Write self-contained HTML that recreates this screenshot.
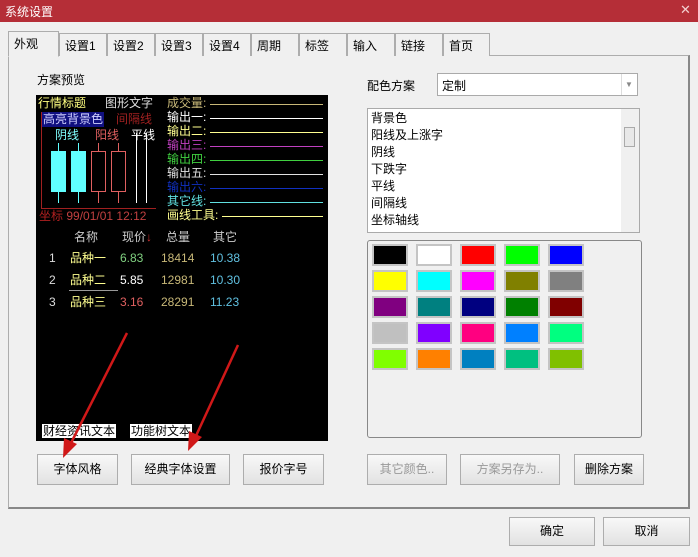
<!DOCTYPE html>
<html><head><meta charset="utf-8"><style>
*{margin:0;padding:0;box-sizing:border-box}
body{width:698px;height:557px;background:#f0f0f0;font-family:"Liberation Sans","Noto Sans CJK SC",sans-serif;font-size:12px;color:#000;position:relative;overflow:hidden}
.a{position:absolute;white-space:nowrap}
.tab{position:absolute;top:33px;height:23px;border:1px solid #adadad;border-bottom:none;background:#f0f0f0;padding:3px 0 0 5px;font-size:12px}
.btn{position:absolute;border:1px solid #adadad;background:linear-gradient(#f8f8f8,#e2e2e2);text-align:center;font-size:12px}
.pv{position:absolute;left:36px;top:95px;width:292px;height:346px;background:#000;overflow:hidden}
.pv .a{font-size:12px;line-height:14px}
.ln{position:absolute;height:1px}
.sw{position:absolute;width:36px;height:22px;border:2px solid #c4c4c4}
.rc{position:absolute;width:15px;height:41px;border:1px solid #e06060;background:#000}
</style></head><body>
<div class="a" style="left:0;top:0;width:698px;height:22px;background:#b52e37"></div>
<div class="a" style="left:5px;top:3px;color:#fff;font-size:12px">系统设置</div>
<div class="a" style="left:680px;top:2px;color:#f3d0d0;font-size:13px">✕</div>
<div class="a" style="left:8px;top:55px;width:682px;height:454px;border:1px solid #adadad;border-right:2px solid #888;border-bottom:2px solid #888;background:#f0f0f0"></div>
<div class="tab" style="left:8px;top:31px;width:51px;height:26px;border-bottom:1px solid #f0f0f0;z-index:2">外观</div>
<div class="tab" style="left:59px;width:48px">设置1</div>
<div class="tab" style="left:107px;width:48px">设置2</div>
<div class="tab" style="left:155px;width:48px">设置3</div>
<div class="tab" style="left:203px;width:48px">设置4</div>
<div class="tab" style="left:251px;width:48px">周期</div>
<div class="tab" style="left:299px;width:48px">标签</div>
<div class="tab" style="left:347px;width:48px">输入</div>
<div class="tab" style="left:395px;width:48px">链接</div>
<div class="tab" style="left:443px;width:47px">首页</div>
<div class="a" style="left:37px;top:71px">方案预览</div>
<div class="pv">
 <div class="a" style="left:2px;top:1px;color:#ffff80">行情标题</div>
 <div class="a" style="left:69px;top:1px;color:#e0e0e0">图形文字</div>
 <div class="a" style="left:5px;top:17px;width:63px;height:15px;background:#101080"></div>
 <div class="a" style="left:7px;top:17px;color:#d0d0ff">高亮背景色</div>
 <div class="a" style="left:80px;top:17px;color:#a02020">间隔线</div>
 <div class="ln" style="left:5px;top:17px;width:1px;height:96px;background:#a02020"></div>
 <div class="ln" style="left:5px;top:113px;width:115px;background:#a02020"></div>
 <div class="a" style="left:19px;top:33px;color:#80ffff">阴线</div>
 <div class="a" style="left:59px;top:33px;color:#e06060">阳线</div>
 <div class="a" style="left:95px;top:33px;color:#fff">平线</div>
 <div class="ln" style="left:22px;top:48px;width:1px;height:60px;background:#60ffff"></div>
 <div class="a" style="left:15px;top:56px;width:15px;height:41px;background:#60ffff"></div>
 <div class="ln" style="left:42px;top:48px;width:1px;height:60px;background:#60ffff"></div>
 <div class="a" style="left:35px;top:56px;width:15px;height:41px;background:#60ffff"></div>
 <div class="ln" style="left:62px;top:48px;width:1px;height:60px;background:#e06060"></div>
 <div class="rc" style="left:55px;top:56px"></div>
 <div class="ln" style="left:82px;top:48px;width:1px;height:60px;background:#e06060"></div>
 <div class="rc" style="left:75px;top:56px"></div>
 <div class="ln" style="left:100px;top:38px;width:1px;height:70px;background:#fff"></div>
 <div class="ln" style="left:110px;top:38px;width:1px;height:70px;background:#fff"></div>
 <div class="a" style="left:3px;top:114px;color:#b02020">坐标 <span style="color:#c04040">99/01/01 12:12</span></div>
 <div class="a" style="left:131px;top:1px;color:#c8b878">成交量:</div><div class="ln" style="left:174px;top:9px;width:113px;background:#c8b878"></div>
 <div class="a" style="left:131px;top:15px;color:#fff">输出一:</div><div class="ln" style="left:174px;top:23px;width:113px;background:#fff"></div>
 <div class="a" style="left:131px;top:29px;color:#ffff90">输出二:</div><div class="ln" style="left:174px;top:37px;width:113px;background:#ffff90"></div>
 <div class="a" style="left:131px;top:43px;color:#c040c0">输出三:</div><div class="ln" style="left:174px;top:51px;width:113px;background:#c040c0"></div>
 <div class="a" style="left:131px;top:57px;color:#40d040">输出四:</div><div class="ln" style="left:174px;top:65px;width:113px;background:#40d040"></div>
 <div class="a" style="left:131px;top:71px;color:#e0e0e0">输出五:</div><div class="ln" style="left:174px;top:79px;width:113px;background:#e0e0e0"></div>
 <div class="a" style="left:131px;top:85px;color:#1030c0">输出六:</div><div class="ln" style="left:174px;top:93px;width:113px;background:#1030c0"></div>
 <div class="a" style="left:131px;top:99px;color:#60e0e0">其它线:</div><div class="ln" style="left:174px;top:107px;width:113px;background:#60e0e0"></div>
 <div class="a" style="left:131px;top:113px;color:#ffff90">画线工具:</div><div class="ln" style="left:186px;top:121px;width:101px;background:#ffff90"></div>
 <div class="a" style="left:38px;top:135px;color:#ccc">名称</div>
 <div class="a" style="left:86px;top:135px;color:#ccc">现价<span style="color:#d03030">↓</span></div>
 <div class="a" style="left:130px;top:135px;color:#ccc">总量</div>
 <div class="a" style="left:177px;top:135px;color:#ccc">其它</div>
 <div class="a" style="left:13px;top:156px;color:#ddd">1</div><div class="a" style="left:34px;top:156px;color:#ffff90">品种一</div><div class="a" style="left:84px;top:156px;color:#80d080">6.83</div><div class="a" style="left:125px;top:156px;color:#c8b878">18414</div><div class="a" style="left:174px;top:156px;color:#60c0e0">10.38</div>
 <div class="a" style="left:13px;top:178px;color:#ddd">2</div><div class="a" style="left:34px;top:178px;color:#ffff90">品种二</div><div class="a" style="left:84px;top:178px;color:#fff">5.85</div><div class="a" style="left:125px;top:178px;color:#c8b878">12981</div><div class="a" style="left:174px;top:178px;color:#60c0e0">10.30</div>
 <div class="ln" style="left:33px;top:195px;width:49px;background:#999"></div>
 <div class="a" style="left:13px;top:200px;color:#ddd">3</div><div class="a" style="left:34px;top:200px;color:#ffff90">品种三</div><div class="a" style="left:84px;top:200px;color:#e06060">3.16</div><div class="a" style="left:125px;top:200px;color:#c8b878">28291</div><div class="a" style="left:174px;top:200px;color:#60c0e0">11.23</div>
 <div class="a" style="left:6px;top:329px;background:#fff;color:#000;padding:0 1px">财经资讯文本</div>
 <div class="a" style="left:94px;top:329px;background:#fff;color:#000;padding:0 1px">功能树文本</div>
</div>
<div class="btn" style="left:37px;top:454px;width:81px;height:31px;line-height:29px">字体风格</div>
<div class="btn" style="left:131px;top:454px;width:99px;height:31px;line-height:29px">经典字体设置</div>
<div class="btn" style="left:243px;top:454px;width:81px;height:31px;line-height:29px">报价字号</div>
<svg class="a" style="left:0;top:0" width="698" height="557">
 <line x1="127" y1="333" x2="70" y2="445" stroke="#d01818" stroke-width="2.5"/>
 <polygon points="63,458 64,438 77,444" fill="#d01818"/>
 <line x1="238" y1="345" x2="195" y2="438" stroke="#d01818" stroke-width="2.5"/>
 <polygon points="188,451 189,431 202,437" fill="#d01818"/>
</svg>
<div class="a" style="left:367px;top:77px">配色方案</div>
<div class="a" style="left:437px;top:73px;width:201px;height:23px;border:1px solid #aaa;background:#fff"></div>
<div class="a" style="left:442px;top:77px">定制</div>
<div class="a" style="left:621px;top:74px;width:1px;height:21px;background:#ddd"></div>
<div class="a" style="left:625px;top:80px;color:#888;font-size:8px">▼</div>
<div class="a" style="left:367px;top:108px;width:273px;height:125px;border:1px solid #aaa;background:#fff"></div>
<div class="a" style="left:621px;top:109px;width:18px;height:123px;background:#f0f0f0"></div>
<div class="a" style="left:624px;top:127px;width:11px;height:20px;border:1px solid #aaa;background:#e8e8e8"></div>
<div class="a" style="left:371px;top:110px;line-height:17px">背景色<br>阳线及上涨字<br>阴线<br>下跌字<br>平线<br>间隔线<br>坐标轴线</div>
<div class="a" style="left:367px;top:240px;width:275px;height:198px;border:1px solid #888;border-radius:3px"></div>
<div class="sw" style="left:372px;top:244px;background:#000"></div>
<div class="sw" style="left:416px;top:244px;background:#fff"></div>
<div class="sw" style="left:460px;top:244px;background:#ff0000"></div>
<div class="sw" style="left:504px;top:244px;background:#00ff00"></div>
<div class="sw" style="left:548px;top:244px;background:#0000ff"></div>
<div class="sw" style="left:372px;top:270px;background:#ffff00"></div>
<div class="sw" style="left:416px;top:270px;background:#00ffff"></div>
<div class="sw" style="left:460px;top:270px;background:#ff00ff"></div>
<div class="sw" style="left:504px;top:270px;background:#808000"></div>
<div class="sw" style="left:548px;top:270px;background:#808080"></div>
<div class="sw" style="left:372px;top:296px;background:#800080"></div>
<div class="sw" style="left:416px;top:296px;background:#008080"></div>
<div class="sw" style="left:460px;top:296px;background:#000080"></div>
<div class="sw" style="left:504px;top:296px;background:#008000"></div>
<div class="sw" style="left:548px;top:296px;background:#800000"></div>
<div class="sw" style="left:372px;top:322px;background:#c0c0c0"></div>
<div class="sw" style="left:416px;top:322px;background:#8000ff"></div>
<div class="sw" style="left:460px;top:322px;background:#ff0080"></div>
<div class="sw" style="left:504px;top:322px;background:#0080ff"></div>
<div class="sw" style="left:548px;top:322px;background:#00ff80"></div>
<div class="sw" style="left:372px;top:348px;background:#80ff00"></div>
<div class="sw" style="left:416px;top:348px;background:#ff8000"></div>
<div class="sw" style="left:460px;top:348px;background:#0080c0"></div>
<div class="sw" style="left:504px;top:348px;background:#00c080"></div>
<div class="sw" style="left:548px;top:348px;background:#80c000"></div>
<div class="btn" style="left:367px;top:454px;width:80px;height:31px;line-height:29px;color:#999">其它颜色..</div>
<div class="btn" style="left:460px;top:454px;width:100px;height:31px;line-height:29px;color:#999">方案另存为..</div>
<div class="btn" style="left:574px;top:454px;width:70px;height:31px;line-height:29px">删除方案</div>
<div class="btn" style="left:509px;top:517px;width:86px;height:29px;line-height:27px">确定</div>
<div class="btn" style="left:603px;top:517px;width:87px;height:29px;line-height:27px">取消</div>
</body></html>
